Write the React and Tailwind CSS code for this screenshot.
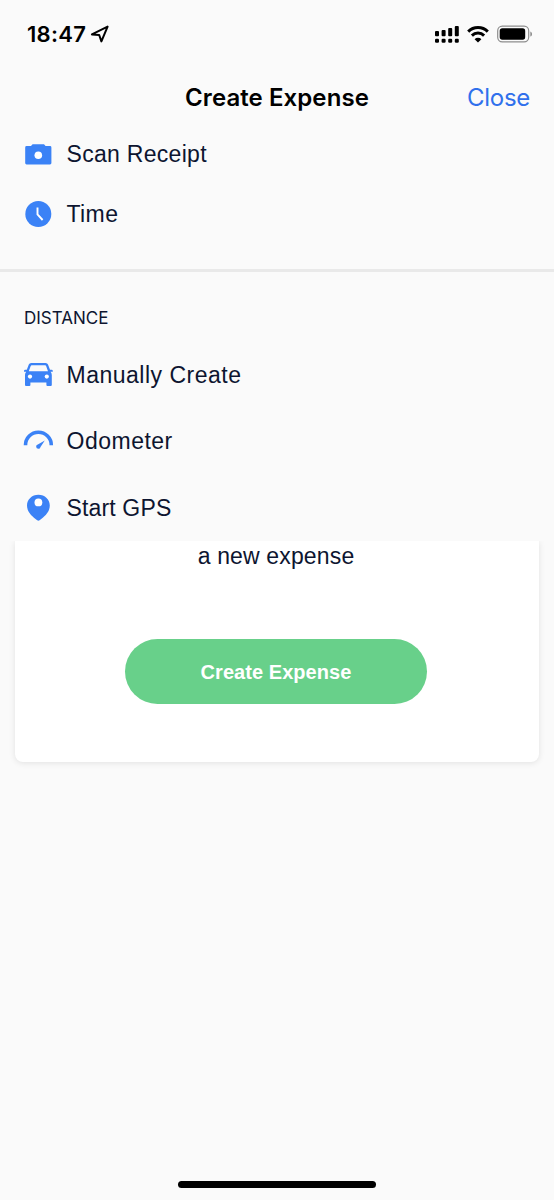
const LIST_FONT = "font-['Liberation_Sans','Arial',sans-serif]"

function LocationArrow() {
  return (
    <svg width="20" height="20" viewBox="0 0 20 20" fill="none" stroke="#000" strokeWidth="2" strokeLinejoin="round">
      <path d="M17.6 2.6 L1.9 10.4 L9.2 11 L11.4 17.4 Z"/>
    </svg>
  )
}

function SignalIcon() {
  return (
    <svg width="26" height="20" viewBox="0 0 26 20" fill="#000">
      <rect x="1" y="7" width="4" height="5.2" rx="1"/>
      <rect x="7.6" y="6" width="4" height="6.2" rx="1"/>
      <rect x="14.2" y="4" width="4" height="8.2" rx="1"/>
      <rect x="20.8" y="2" width="4" height="10.2" rx="1"/>
      <rect x="1" y="14.8" width="4" height="4" rx="1.2"/>
      <rect x="7.6" y="14.8" width="4" height="4" rx="1.2"/>
      <rect x="14.2" y="14.8" width="4" height="4" rx="1.2"/>
      <rect x="20.8" y="14.8" width="4" height="4" rx="1.2"/>
    </svg>
  )
}

function WifiIcon() {
  return (
    <svg width="24" height="20" viewBox="0 0 24 20" fill="none" stroke="#000" strokeWidth="3">
      <path d="M2.2 7.6 A14 14 0 0 1 21.8 7.6"/>
      <path d="M5.9 11.6 A8.7 8.7 0 0 1 18.1 11.6"/>
      <path d="M12 18.6 L8.6 15.2 A4.8 4.8 0 0 1 15.4 15.2 Z" fill="#000" stroke="none"/>
    </svg>
  )
}

function BatteryIcon() {
  return (
    <svg width="38" height="20" viewBox="0 0 38 20">
      <rect x="1.7" y="2.2" width="31" height="15.6" rx="4.6" fill="none" stroke="#8d8d8d" strokeWidth="1.2"/>
      <rect x="3.7" y="4.3" width="25.5" height="11.4" rx="2.6" fill="#000"/>
      <path d="M34.3 7.4 C36.6 8.2 36.6 11.8 34.3 12.6 Z" fill="#8d8d8d"/>
    </svg>
  )
}

function CameraIcon() {
  return (
    <svg width="32" height="32" viewBox="0 0 32 32">
      <path fill="#3b82f6" d="M10.6 6.2 H22 L23.6 8 H28 Q29.4 8 29.4 9.4 V25 Q29.4 26.4 28 26.4 H4.6 Q3.2 26.4 3.2 25 V9.4 Q3.2 8 4.6 8 H9 Z"/>
      <circle cx="16.3" cy="17.3" r="3.8" fill="#fff"/>
    </svg>
  )
}

function ClockIcon() {
  return (
    <svg width="32" height="32" viewBox="0 0 32 32">
      <circle cx="16.3" cy="16" r="13" fill="#3b82f6"/>
      <path d="M15.5 9.4 V16.4 L20.6 22" fill="none" stroke="#fff" strokeWidth="1.9"/>
    </svg>
  )
}

function CarIcon() {
  return (
    <svg width="32" height="32" viewBox="0 0 32 32">
      <path fill="#3b82f6" fillRule="evenodd" d="M9.2 4 H23.6 Q25.4 4 26 5.6 L28 10.8 H29.6 Q30.8 10.8 30.8 12 V12.8 H28.6 Q29.8 14 29.8 16 V26 Q29.8 27 28.8 27 H25.4 Q24.4 27 24.4 26 V23.4 H8.4 V26 Q8.4 27 7.4 27 H4 Q3 27 3 26 V16 Q3 14 4.2 12.8 H2 V12 Q2 10.8 3.2 10.8 H4.8 L6.8 5.6 Q7.4 4 9.2 4 Z M9.6 6.2 Q9 6.2 8.7 7 L6.8 12.3 H26 L24.1 7 Q23.8 6.2 23.2 6.2 Z"/>
      <circle cx="8" cy="17.6" r="2.1" fill="#fff"/>
      <circle cx="24.8" cy="17.6" r="2.1" fill="#fff"/>
    </svg>
  )
}

function GaugeIcon() {
  return (
    <svg width="32" height="32" viewBox="0 0 32 32">
      <path d="M3.5 19.2 A12.9 12.9 0 0 1 29.3 19.2" fill="none" stroke="#3b82f6" strokeWidth="3.6"/>
      <path fill="#3b82f6" d="M22.8 14.4 L18.5 20.9 A2.2 2.2 0 1 1 15.8 18.4 Z"/>
    </svg>
  )
}

function PinIcon() {
  return (
    <svg width="32" height="32" viewBox="0 0 32 32">
      <path fill="#3b82f6" d="M16.4 2.7 C23 2.7 27.8 7.5 27.8 13.5 C27.8 20 22.6 24.6 17.6 28.3 Q16.4 29.2 15.2 28.3 C10.2 24.6 5 20 5 13.5 C5 7.5 9.8 2.7 16.4 2.7 Z"/>
      <circle cx="16.4" cy="10.4" r="3.9" fill="#fff"/>
    </svg>
  )
}

function MenuItem({ icon: Icon, label, className }) {
  return (
    <button className={`flex w-full items-center gap-[12.5px] pl-[22px] text-left ${className}`}>
      <Icon/>
      <span className="whitespace-nowrap text-[23px] text-[#0d1530]">{label}</span>
    </button>
  )
}

export default function App() {
  return (
    <div className={`flex h-[1200px] w-[554px] flex-col overflow-hidden bg-[#fafafa] ${LIST_FONT}`}>
      <div className="relative z-10 h-[541px] shrink-0 bg-[#fafafa]">
        <div className="flex h-[68px] items-center pl-[27px] font-['Inter',sans-serif]">
          <span className="w-[63px] whitespace-nowrap text-[22px] font-semibold tracking-[0.3px]">18:47</span>
          <LocationArrow/>
          <div className="ml-auto flex items-center pr-[20px]">
            <SignalIcon/>
            <div className="ml-[6px]"><WifiIcon/></div>
            <div className="ml-[6px]"><BatteryIcon/></div>
          </div>
        </div>

        <div className="grid h-[60px] grid-cols-[1fr_auto_1fr] items-center font-['Inter',sans-serif] text-2xl">
          <span/>
          <h1 className="whitespace-nowrap font-semibold tracking-[0.08px] text-black">Create Expense</h1>
          <button className="pr-6 text-right tracking-[-0.3px] text-[#3070ec]">Close</button>
        </div>

        <MenuItem icon={CameraIcon} label="Scan Receipt" className="h-[52px] tracking-[0.3px]"/>
        <MenuItem icon={ClockIcon} label="Time" className="h-[68px] tracking-[0.4px]"/>

        <div className="mt-[21px] h-[3px] bg-[#e9e9e9]"/>

        <h2 className="mt-[34px] h-6 pl-6 font-['Inter',sans-serif] text-[17px] leading-6 text-[#0d1530]">DISTANCE</h2>

        <MenuItem icon={CarIcon} label="Manually Create" className="mt-[12px] h-[66px] tracking-[0.5px]"/>
        <MenuItem icon={GaugeIcon} label="Odometer" className="h-[67px] tracking-[0.5px]"/>
        <MenuItem icon={PinIcon} label="Start GPS" className="h-[66px] tracking-[0.15px]"/>
      </div>

      <div className="mx-[15px] flex h-[221px] shrink-0 flex-col items-center rounded-b-lg bg-white pr-[2px] shadow-[0_1px_6px_rgba(0,0,0,0.1)]">
        <p className="h-[30px] whitespace-nowrap text-[23px] leading-[30px] tracking-[0.15px] text-[#0d1530]">a new expense</p>
        <button className="mt-[67.5px] h-[65px] w-[302px] rounded-full bg-[#68d08a] pt-px text-xl font-bold tracking-[0.05px] text-white">
          Create Expense
        </button>
      </div>

      <div className="mx-auto mt-auto mb-[12px] h-[7px] w-[198px] rounded-full bg-black"/>
    </div>
  )
}
